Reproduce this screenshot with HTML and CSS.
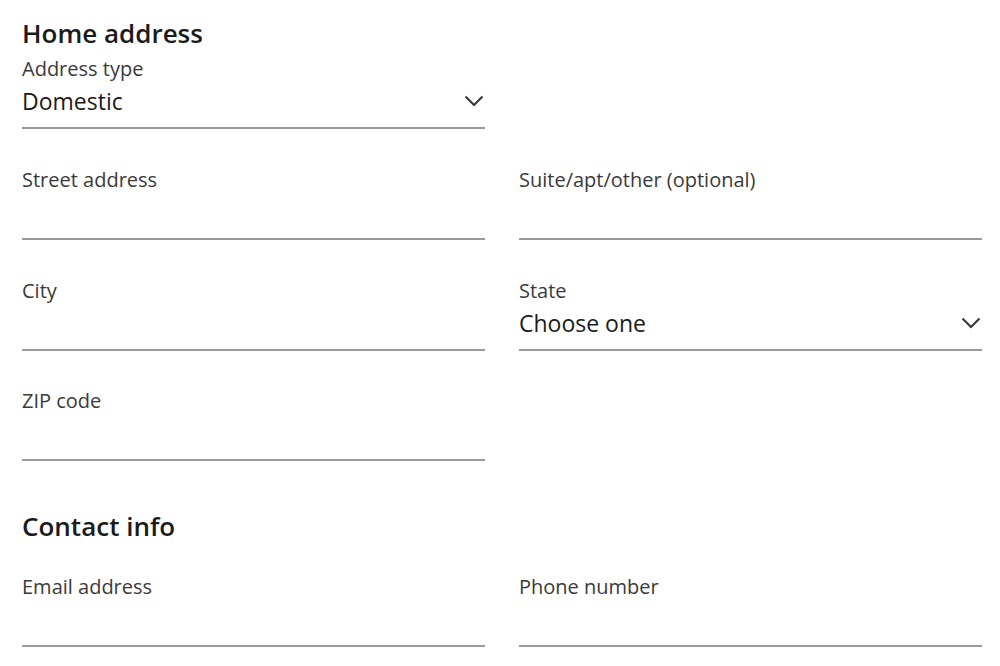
FILE: index.html
```html
<!DOCTYPE html>
<html lang="en">
<head>
<meta charset="utf-8">
<title>Address form</title>
<link rel="stylesheet" href="styles.css">
</head>
<body>
<main class="form">
  <section class="section">
    <h2 class="heading">Home address</h2>
    <div class="grid first">
      <div class="field">
        <div class="label">Address type</div>
        <div class="control select">
          <span class="value">Domestic</span>
          <svg class="chev" width="20" height="12" viewBox="0 0 20 12"><path d="M1.5 1.5 L10 10 L18.5 1.5" fill="none" stroke="#3a3a3a" stroke-width="2.2"/></svg>
        </div>
      </div>
      <div></div>
    </div>
    <div class="grid rows">
      <div class="field">
        <div class="label">Street address</div>
        <div class="control"><span class="value"></span></div>
      </div>
      <div class="field">
        <div class="label">Suite/apt/other (optional)</div>
        <div class="control"><span class="value"></span></div>
      </div>
      <div class="field">
        <div class="label">City</div>
        <div class="control"><span class="value"></span></div>
      </div>
      <div class="field">
        <div class="label">State</div>
        <div class="control select">
          <span class="value">Choose one</span>
          <svg class="chev" width="20" height="12" viewBox="0 0 20 12"><path d="M1.5 1.5 L10 10 L18.5 1.5" fill="none" stroke="#3a3a3a" stroke-width="2.2"/></svg>
        </div>
      </div>
      <div class="field">
        <div class="label">ZIP code</div>
        <div class="control"><span class="value"></span></div>
      </div>
    </div>
  </section>
  <section class="section contact">
    <h2 class="heading">Contact info</h2>
    <div class="grid rows contact-grid">
      <div class="field">
        <div class="label">Email address</div>
        <div class="control"><span class="value"></span></div>
      </div>
      <div class="field">
        <div class="label">Phone number</div>
        <div class="control"><span class="value"></span></div>
      </div>
    </div>
  </section>
</main>
</body>
</html>
```

FILE: styles.css
```css
* { box-sizing: border-box; }
html, body { margin: 0; padding: 0; background: #ffffff; }
body {
  font-family: "Open Sans", "Noto Sans", "Liberation Sans", sans-serif;
  color: #1b1b1b;
}
.form {
  padding: 17px 18px 0 22px;
  width: 1000px;
}
.heading {
  margin: 0;
  font-size: 26px;
  line-height: 32px;
  font-weight: 600;
  color: #1b1b1b;
}
.grid {
  display: grid;
  grid-template-columns: 463px 463px;
  column-gap: 34px;
}
.first { margin-top: 7px; }
.rows { margin-top: 38px; row-gap: 37.7px; }
.field {
  display: flex;
  flex-direction: column;
}
.label {
  font-size: 20px;
  line-height: 26px;
  color: #3a3a3a;
}
.control {
  margin-top: 4px;
  padding-bottom: 11px;
  border-bottom: 2px solid #9a9a9a;
  display: flex;
  align-items: center;
  justify-content: space-between;
  height: 43px;
}
.value {
  font-size: 23px;
  line-height: 30px;
  height: 30px;
  color: #1b1b1b;
}
.chev { margin-right: 1px; margin-top: 0; }
.contact { margin-top: 49px; }
.contact-grid { margin-top: 32px; }
```
